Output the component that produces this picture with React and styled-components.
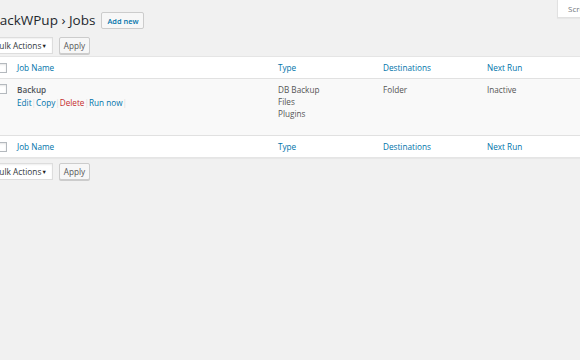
import React from "react";
import styled, { createGlobalStyle } from "styled-components";

const Global = createGlobalStyle`
  html, body { margin: 0; padding: 0; background: #f1f1f1; overflow: hidden; }
  body { font-family: "Open Sans", "Noto Sans", sans-serif; font-size: 8.2px; color: #555; }
  #root { width: 580px; height: 360px; overflow: hidden; }
`;

const Page = styled.div`
  width: 604px;
  margin-left: -12px;
  display: flex;
  flex-direction: column;
`;

const Header = styled.div`
  display: flex;
  align-items: flex-start;
  justify-content: space-between;
  height: 37px;
`;

const TitleGroup = styled.div`
  display: flex;
  align-items: center;
  gap: 6px;
  padding-top: 11px;
  padding-left: 3px;
`;

const Title = styled.h1`
  margin: 0;
  font-size: 13.5px;
  font-weight: 400;
  color: #23282d;
  line-height: 19px;
`;

const AddNew = styled.a`
  display: inline-flex;
  align-items: center;
  height: 17px;
  padding: 0 5px;
  box-sizing: border-box;
  border: 1px solid #ccc;
  border-radius: 2px;
  background: #f7f7f7;
  color: #0073aa;
  font-weight: 600;
  font-size: 7.4px;
  text-decoration: none;
`;

const ScreenTab = styled.div`
  margin-right: -12px;
  width: 47px;
  height: 18px;
  padding-left: 10px;
  box-sizing: border-box;
  display: flex;
  align-items: center;
  background: #fff;
  border: 1px solid #e1e1e1;
  border-top: none;
  box-shadow: 0 1px 1px rgba(0,0,0,.04);
  color: #72777c;
  font-size: 8px;
  white-space: nowrap;
  overflow: hidden;
`;

const Nav = styled.div`
  display: flex;
  align-items: center;
  gap: 6px;
  height: 17px;
  margin-top: ${(p) => p.$top || 0}px;
`;

const Select = styled.div`
  display: flex;
  align-items: center;
  justify-content: space-between;
  width: 65px;
  height: 17px;
  padding: 0 5px 0 5px;
  background: #fff;
  border: 1px solid #ddd;
  box-shadow: inset 0 1px 2px rgba(0,0,0,.07);
  color: #32373c;
  font-size: 8.3px;
  box-sizing: border-box;
`;

const Caret = styled.span`
  font-size: 5.5px;
  color: #222;
`;

const Button = styled.div`
  display: flex;
  align-items: center;
  justify-content: center;
  width: 31px;
  height: 17px;
  box-sizing: border-box;
  background: #f7f7f7;
  border: 1px solid #ccc;
  border-radius: 2px;
  box-shadow: 0 1px 0 #ccc;
  color: #555;
  font-size: 8.2px;
`;

const Table = styled.div`
  margin-top: 2px;
  border: 1px solid #e5e5e5;
  box-shadow: 0 1px 1px rgba(0,0,0,.04);
  background: #fff;
`;

const Row = styled.div`
  display: grid;
  grid-template-columns: 28px 261px 105px 104px 1fr;
  height: ${(p) => p.$h}px;
  background: ${(p) => (p.$alt ? "#f9f9f9" : "#fff")};
  border-top: ${(p) => (p.$top ? "1px solid #e1e1e1" : "none")};
  border-bottom: ${(p) => (p.$bottom ? "1px solid #e1e1e1" : "none")};
  box-sizing: border-box;
`;

const Cell = styled.div`
  padding-top: ${(p) => p.$pt || 0}px;
  display: flex;
  flex-direction: column;
  line-height: 12px;
`;

const HeadCell = styled.div`
  display: flex;
  align-items: center;
  color: #0073aa;
`;

const CheckCell = styled.div`
  display: flex;
  align-items: ${(p) => (p.$top ? "flex-start" : "center")};
  padding-top: ${(p) => (p.$top ? 5 : 0)}px;
  padding-left: 8px;
`;

const Check = styled.span`
  display: block;
  width: 10px;
  height: 10px;
  box-sizing: border-box;
  border: 1px solid #b4b9be;
  background: #fff;
  box-shadow: inset 0 1px 2px rgba(0,0,0,.1);
`;

const JobTitle = styled.span`
  font-weight: 600;
  color: #50555a;
`;

const Actions = styled.div`
  display: flex;
  margin-top: 1px;
`;

const Act = styled.span`
  color: ${(p) => (p.$danger ? "#c62d2d" : "#0073aa")};
`;

const Sep = styled.span`
  width: 4.5px;
  text-align: center;
  color: #ddd;
`;

const Columns = () => (
  <>
    <CheckCell>
      <Check />
    </CheckCell>
    <HeadCell>Job Name</HeadCell>
    <HeadCell>Type</HeadCell>
    <HeadCell>Destinations</HeadCell>
    <HeadCell>Next Run</HeadCell>
  </>
);

const Bulk = ({ top }) => (
  <Nav $top={top}>
    <Select>
      Bulk Actions <Caret>▼</Caret>
    </Select>
    <Button>Apply</Button>
  </Nav>
);

export default function App() {
  return (
    <>
      <Global />
      <Page>
        <Header>
          <TitleGroup>
            <Title>BackWPup › Jobs</Title>
            <AddNew>Add new</AddNew>
          </TitleGroup>
          <ScreenTab>Screen Options</ScreenTab>
        </Header>
        <Bulk />
        <Table>
          <Row $h={22} $bottom>
            <Columns />
          </Row>
          <Row $h={56} $alt>
            <CheckCell $top>
              <Check />
            </CheckCell>
            <Cell $pt={5}>
              <JobTitle>Backup</JobTitle>
              <Actions>
                <Act>Edit</Act>
                <Sep>|</Sep>
                <Act>Copy</Act>
                <Sep>|</Sep>
                <Act $danger>Delete</Act>
                <Sep>|</Sep>
                <Act>Run now</Act>
                <Sep>|</Sep>
              </Actions>
            </Cell>
            <Cell $pt={5}>
              <span>DB Backup</span>
              <span>Files</span>
              <span>Plugins</span>
            </Cell>
            <Cell $pt={5}>
              <span>Folder</span>
            </Cell>
            <Cell $pt={5}>
              <span>Inactive</span>
            </Cell>
          </Row>
          <Row $h={22} $top>
            <Columns />
          </Row>
        </Table>
        <Bulk top={5} />
      </Page>
    </>
  );
}
